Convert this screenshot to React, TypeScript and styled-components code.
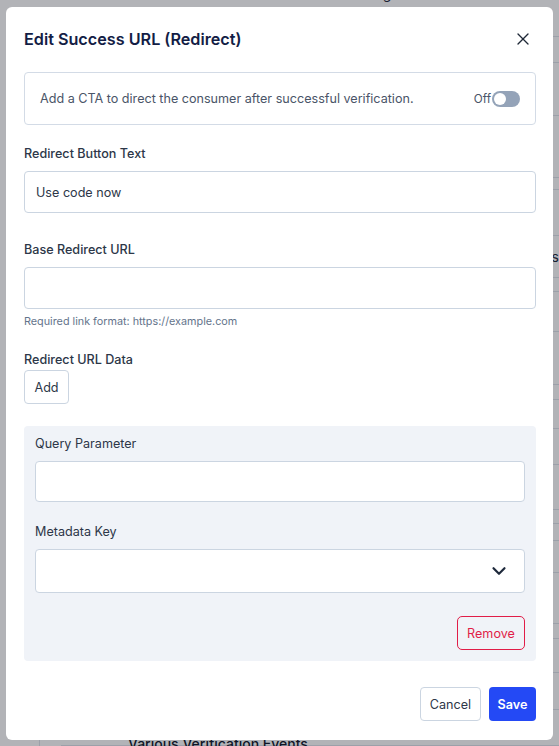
import styled, { createGlobalStyle } from "styled-components";
import { X, ChevronDown } from "lucide-react";

const GlobalStyle = createGlobalStyle`
  * { box-sizing: border-box; }
  body {
    margin: 0;
    font-family: Inter, "Noto Sans", sans-serif;
    background: #fff;
  }
`;

// bottom edges of the table rows that sit behind the dialog
const rows = [37, 63, 116, 178, 190, 236, 278, 292, 332, 385, 400, 429, 465, 510, 524, 541, 573, 624, 639, 673, 710, 746];

const App = () => {
  return (
    <>
      <GlobalStyle />
      <Page>
        <PageTop>
          <span>Settings</span>
        </PageTop>
        <PageBody>
          <SideColumn />
          <PageTable>
            {rows.map((y, i) => (
              <PageRow key={i} $h={i === 0 ? y - 7 : y - rows[i - 1]}>
                {i === 6 ? "success" : i === 13 ? "event" : ""}
              </PageRow>
            ))}
          </PageTable>
        </PageBody>
        <PageFoot>Various Verification Events</PageFoot>
      </Page>

      <Overlay>
        <Modal>
          <Header>
            <Title>Edit Success URL (Redirect)</Title>
            <CloseButton aria-label="Close">
              <X size={20} strokeWidth={1.6} />
            </CloseButton>
          </Header>

          <Notice>
            <span>Add a CTA to direct the consumer after successful verification.</span>
            <ToggleWrap>
              <OffText>Off</OffText>
              <Toggle>
                <Knob />
              </Toggle>
            </ToggleWrap>
          </Notice>

          <Label $top={19}>Redirect Button Text</Label>
          <Input defaultValue="Use code now" />

          <Label $top={27}>Base Redirect URL</Label>
          <Input />
          <Helper>Required link format: https://example.com</Helper>

          <Label $top={20} $after={0}>Redirect URL Data</Label>
          <LightButton>Add</LightButton>

          <Panel>
            <Label $top={0} $weight={400}>Query Parameter</Label>
            <Input $h={41} />
            <Label $top={20} $weight={400}>Metadata Key</Label>
            <Select>
              <ChevronDown size={22} strokeWidth={2.4} />
            </Select>
            <RemoveButton>Remove</RemoveButton>
          </Panel>

          <Footer>
            <LightButton $w={61}>Cancel</LightButton>
            <SaveButton>Save</SaveButton>
          </Footer>
        </Modal>
      </Overlay>
    </>
  );
};

export default App;

const Page = styled.div`
  height: 746px;
  overflow: hidden;
  background: #fff;
  position: relative;
`;

const PageTop = styled.div`
  height: 7px;
  padding-left: 345px;
  overflow: hidden;

  span {
    display: block;
    margin-top: -15px;
    font-size: 14px;
    line-height: 18px;
    color: #1e293b;
  }
`;

const PageBody = styled.div`
  display: flex;
`;

const SideColumn = styled.div`
  width: 93px;
`;

const PageTable = styled.div`
  flex: 1;
  border-left: 1px solid #dfe3ea;
  padding-left: 21px;
`;

const PageRow = styled.div<{ $h: number }>`
  height: ${(p) => p.$h}px;
  border-bottom: 1px solid #dfe3ea;
  padding-left: 443px;
  font-size: 14px;
  color: #1e293b;
  display: flex;
  align-items: center;
`;

const PageFoot = styled.div`
  position: absolute;
  left: 128px;
  top: 735px;
  font-size: 14px;
  font-weight: 500;
  color: #0f172a;
`;

const Overlay = styled.div`
  position: fixed;
  inset: 0;
  background: rgba(15, 20, 30, 0.32);
  padding: 7px 6px 0 6px;
`;

const Modal = styled.div`
  width: 547px;
  height: 733px;
  background: #fff;
  border-radius: 6px;
  padding: 20px 17px 19px 18px;
  display: flex;
  flex-direction: column;
`;

const Header = styled.div`
  display: flex;
  align-items: center;
  justify-content: space-between;
  height: 24px;
`;

const Title = styled.h2`
  margin: 0;
  font-size: 16.2px;
  line-height: 24px;
  font-weight: 600;
  color: #131d45;
`;

const CloseButton = styled.button`
  width: 20px;
  height: 20px;
  padding: 0;
  margin-right: 3px;
  border: none;
  background: none;
  color: #1f2937;
  display: flex;
  align-items: center;
  justify-content: center;
`;

const Notice = styled.div`
  margin-top: 21px;
  height: 53px;
  border: 1px solid #d3dbe6;
  border-radius: 4px;
  padding: 0 15px;
  display: flex;
  align-items: center;
  justify-content: space-between;
  font-size: 12.6px;
  color: #4a5568;
`;

const ToggleWrap = styled.div`
  display: flex;
  align-items: center;
  gap: 1px;
`;

const OffText = styled.span`
  font-size: 11.7px;
  color: #4a5568;
`;

const Toggle = styled.div`
  width: 28px;
  height: 16px;
  border-radius: 8px;
  background: #94a3b8;
  padding: 2px;
  display: flex;
  align-items: center;
`;

const Knob = styled.div`
  width: 12px;
  height: 12px;
  border-radius: 50%;
  background: #fff;
`;

const Label = styled.div<{ $top: number; $after?: number; $weight?: number }>`
  margin-top: ${(p) => p.$top}px;
  margin-bottom: ${(p) => (p.$after ?? 7)}px;
  font-size: 12.6px;
  line-height: 20px;
  font-weight: ${(p) => p.$weight ?? 500};
  color: #2d3748;
`;

const Input = styled.input<{ $h?: number }>`
  height: ${(p) => p.$h ?? 42}px;
  width: 100%;
  border: 1px solid #cbd5e1;
  border-radius: 4px;
  padding: 0 11px;
  font-family: inherit;
  font-size: 12.6px;
  color: #2d3748;
  background: #fff;
  outline: none;
`;

const Helper = styled.div`
  margin-top: 5px;
  font-size: 10.8px;
  line-height: 16px;
  color: #64748b;
`;

const LightButton = styled.button<{ $w?: number }>`
  width: ${(p) => p.$w ?? 45}px;
  height: 34px;
  border: 1px solid #cbd5e1;
  border-radius: 4px;
  background: #fff;
  font-family: inherit;
  font-size: 12.6px;
  color: #2d3748;
  padding: 0;
`;

const Panel = styled.div`
  margin-top: 22px;
  background: #f0f3f8;
  border-radius: 4px;
  padding: 8px 11px 11px;
  display: flex;
  flex-direction: column;
`;

const Select = styled.div`
  height: 44px;
  background: #fff;
  border: 1px solid #cbd5e1;
  border-radius: 4px;
  display: flex;
  align-items: center;
  justify-content: flex-end;
  padding-right: 14px;
  color: #1e293b;
`;

const RemoveButton = styled.button`
  align-self: flex-end;
  margin-top: 23px;
  width: 68px;
  height: 34px;
  border: 1px solid #e11d48;
  border-radius: 5px;
  background: transparent;
  font-family: inherit;
  font-size: 12.6px;
  color: #e11d48;
  padding: 0;
`;

const Footer = styled.div`
  margin-top: auto;
  display: flex;
  justify-content: flex-end;
  gap: 8px;
`;

const SaveButton = styled.button`
  width: 47px;
  height: 34px;
  border: none;
  border-radius: 4px;
  background: #2449f5;
  font-family: inherit;
  font-size: 12.6px;
  font-weight: 600;
  color: #fff;
  padding: 0;
`;
